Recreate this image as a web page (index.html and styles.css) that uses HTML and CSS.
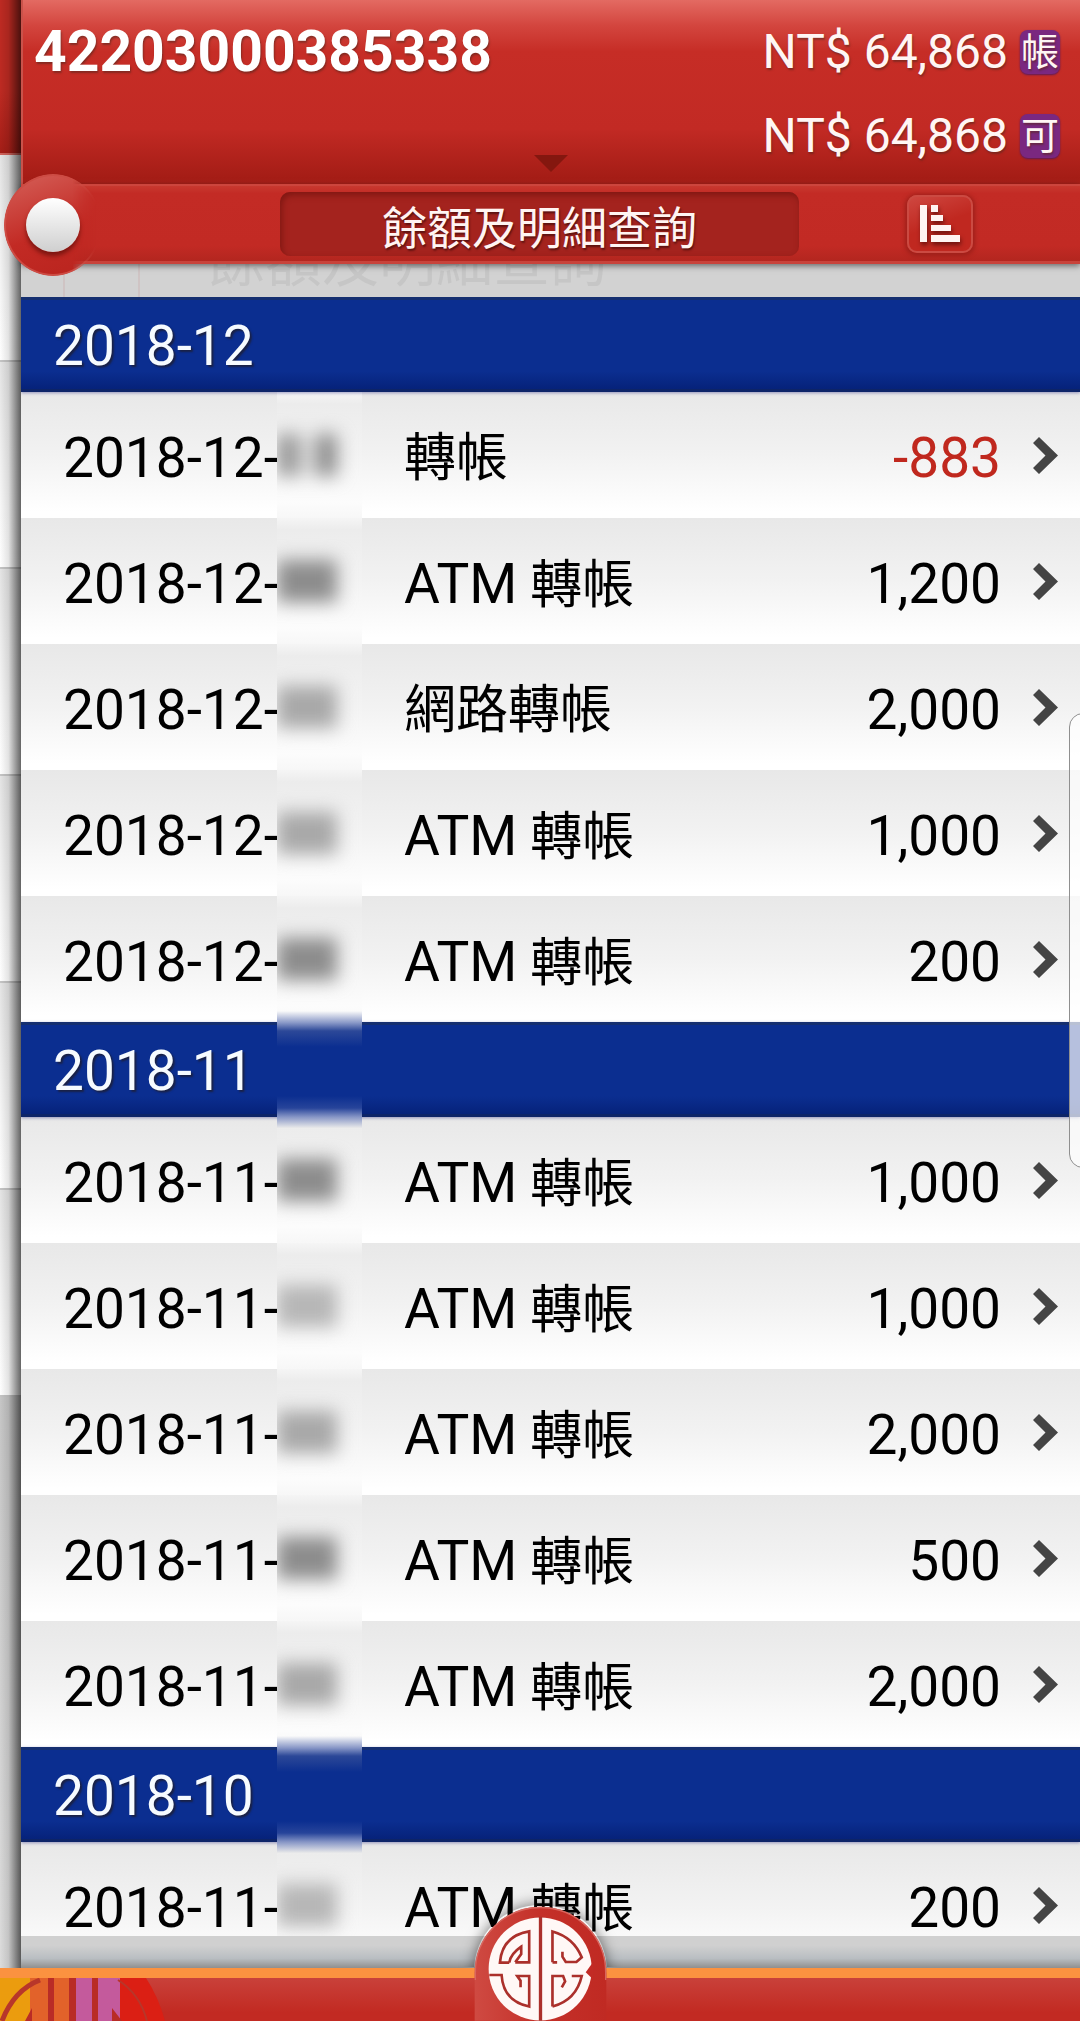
FILE: index.html
```html
<!DOCTYPE html>
<html lang="zh-Hant">
<head>
<meta charset="utf-8">
<meta name="viewport" content="width=device-width, initial-scale=1">
<title>餘額及明細查詢</title>
<link rel="stylesheet" href="styles.css">
</head>
<body>
<svg class="defs" aria-hidden="true">
  <symbol id="chevron" viewBox="0 0 25 37"><path d="M6 0 25 18.500 6 37 0 31 12.500 18.500 0 6Z" fill="#444"/></symbol>
</svg>
<div class="app">
  <aside class="underlay" aria-hidden="true">
    <div class="underlay-head"></div>
    <div class="underlay-row"></div>
    <div class="underlay-row"></div>
    <div class="underlay-row"></div>
    <div class="underlay-row"></div>
    <div class="underlay-row"></div>
    <div class="underlay-row"></div>
    <div class="underlay-rest"></div>
  </aside>

  <main class="panel">
    <header class="account">
      <h1 class="account-no">42203000385338</h1>
      <div class="balances">
        <p class="balance">NT$ 64,868 <span class="badge">帳</span></p>
        <p class="balance">NT$ 64,868 <span class="badge">可</span></p>
      </div>
      <span class="caret"></span>
    </header>

    <nav class="toolbar">
      <button class="knob" type="button" aria-label="選單"><span class="knob-dot"></span></button>
      <h2 class="toolbar-title">餘額及明細查詢</h2>
      <button class="sort" type="button" aria-label="排序">
        <svg class="sort-icon" viewBox="0 0 40 37"><path d="M0 0h7v37H0zM11 0h7v7h-7zM11 10h12v6H11zM11 20h20v6H11zM11 30h29v7H11z" fill="#fff4f2"/></svg>
      </button>
    </nav>

    <div class="ghost" aria-hidden="true"><span class="ghost-box"></span><span class="ghost-text">餘額及明細查詢</span></div>

    <div class="list">
      <section>
        <h3 class="month">2018-12</h3>
        <a class="row" href="#"><span class="date">2018-12-</span><span class="mask"><i class="blob split"></i></span><span class="desc">轉帳</span><span class="amount negative">-883</span><svg class="chevron"><use href="#chevron"/></svg></a>
        <a class="row" href="#"><span class="date">2018-12-</span><span class="mask"><i class="blob dark"></i></span><span class="desc"><b>ATM</b> 轉帳</span><span class="amount">1,200</span><svg class="chevron"><use href="#chevron"/></svg></a>
        <a class="row" href="#"><span class="date">2018-12-</span><span class="mask"><i class="blob"></i></span><span class="desc">網路轉帳</span><span class="amount">2,000</span><svg class="chevron"><use href="#chevron"/></svg></a>
        <a class="row" href="#"><span class="date">2018-12-</span><span class="mask"><i class="blob"></i></span><span class="desc"><b>ATM</b> 轉帳</span><span class="amount">1,000</span><svg class="chevron"><use href="#chevron"/></svg></a>
        <a class="row" href="#"><span class="date">2018-12-</span><span class="mask"><i class="blob dark"></i></span><span class="desc"><b>ATM</b> 轉帳</span><span class="amount">200</span><svg class="chevron"><use href="#chevron"/></svg></a>
      </section>
      <section>
        <h3 class="month smeared">2018-11</h3>
        <a class="row" href="#"><span class="date">2018-11-</span><span class="mask"><i class="blob dark"></i></span><span class="desc"><b>ATM</b> 轉帳</span><span class="amount">1,000</span><svg class="chevron"><use href="#chevron"/></svg></a>
        <a class="row" href="#"><span class="date">2018-11-</span><span class="mask"><i class="blob light"></i></span><span class="desc"><b>ATM</b> 轉帳</span><span class="amount">1,000</span><svg class="chevron"><use href="#chevron"/></svg></a>
        <a class="row" href="#"><span class="date">2018-11-</span><span class="mask"><i class="blob"></i></span><span class="desc"><b>ATM</b> 轉帳</span><span class="amount">2,000</span><svg class="chevron"><use href="#chevron"/></svg></a>
        <a class="row" href="#"><span class="date">2018-11-</span><span class="mask"><i class="blob dark"></i></span><span class="desc"><b>ATM</b> 轉帳</span><span class="amount">500</span><svg class="chevron"><use href="#chevron"/></svg></a>
        <a class="row" href="#"><span class="date">2018-11-</span><span class="mask"><i class="blob"></i></span><span class="desc"><b>ATM</b> 轉帳</span><span class="amount">2,000</span><svg class="chevron"><use href="#chevron"/></svg></a>
      </section>
      <section>
        <h3 class="month smeared">2018-10</h3>
        <a class="row" href="#"><span class="date">2018-11-</span><span class="mask"><i class="blob light"></i></span><span class="desc"><b>ATM</b> 轉帳</span><span class="amount">200</span><svg class="chevron"><use href="#chevron"/></svg></a>
      </section>
    </div>
    <div class="panel-end"></div>
  </main>

  <footer class="dock">
    <svg class="emblem" viewBox="0 0 165 43" aria-hidden="true">
      <path d="M118 0H146Q158 18 165 43H118Z" fill="#db1f14"/>
      <path d="M0 0H30V43H0Z" fill="#eb9c0e"/>
      <path d="M30 0H72V43H30Z" fill="#e2622a"/>
      <path d="M72 0H120V43H72Z" fill="#c45a9c"/>
      <path d="M48 0h6v43h-6zM69 0h7v43h-7zM92 0h6v43h-6z" fill="#b92c26"/>
      <path d="M2 43Q14 12 40 2" fill="none" stroke="#b8362a" stroke-width="5"/>
      <path d="M118 2Q140 16 147 43" fill="none" stroke="#b8362a" stroke-width="2"/>
      <path d="M25 43 32 30V43ZM112 43V30L122 43Z" fill="#b92c26"/>
    </svg>
    <button class="home" type="button" aria-label="首頁">
      <svg class="home-logo" viewBox="100 75 400 348">
        <defs><linearGradient id="dome" x1="0" y1="0" x2="1" y2="0"><stop offset="0" stop-color="#cf4a42"/><stop offset=".5" stop-color="#c43029"/><stop offset="1" stop-color="#c02a23"/></linearGradient></defs>
        <path d="M102 423V278A198 198 0 0 1 498 278V423Z" fill="url(#dome)"/>
        <path d="M104 300V278A196 196 0 0 1 496 278V300" fill="none" stroke="#d8665e" stroke-width="4"/>
        <circle cx="299" cy="267" r="155" fill="#fff8f6"/>
        <path d="M460 244 436 277 460 300Z" fill="#c22b25"/>
        <g fill="none" stroke="#ab302b" stroke-width="8">
          <path d="M300 110V423" stroke-width="10"/>
          <path d="M146 285H183Q188 364 266 380V288H230L240 302V322"/>
          <path d="M206 248H178Q184 168 266 154V247H224M206 248Q210 222 242 200V222L224 247"/>
          <path d="M336 247V154Q400 172 424 232L408 246H376L366 230V215"/>
          <path d="M336 247H350M336 380V288H368L374 304 364 322M394 288H424Q408 360 336 380"/>
        </g>
      </svg>
    </button>
  </footer>
  <span class="edge-handle"></span>
</div>
</body>
</html>
```
FILE: styles.css
```css
* { box-sizing: border-box; margin: 0; padding: 0; }

body {
  font-family: Roboto, "Noto Sans CJK TC", sans-serif;
  color: #000;
  background: #d2d2d2;
}

button { border: 0; background: none; cursor: pointer; }

.defs { position: absolute; width: 0; height: 0; }

.app {
  position: relative;
  display: grid;
  grid-template: minmax(0, 1fr) auto / 21px minmax(0, 1fr);
  height: 100vh;
  overflow: hidden;
}

/* Page peeking out from under the sliding panel */
.underlay {
  position: relative;
  display: flex;
  flex-direction: column;
  background: #d2d2d2;
  overflow: hidden;
}
.underlay::after {
  content: "";
  position: absolute;
  inset: 0;
  background: linear-gradient(90deg, transparent 0, rgba(0, 0, 0, .1) 40%, rgba(0, 0, 0, .6) 100%);
}
.underlay-head { flex: none; height: 155px; background: linear-gradient(#bd2a22 0 60%, #a51e17); border-bottom: 2px solid #cf625b; }
.underlay-row { flex: none; height: 207px; background: linear-gradient(#e4e4e4, #fff); border-bottom: 2px solid #c4c4c4; }
.underlay-rest { flex: 1; background: linear-gradient(#c6c6c6, #dcdcdc); }

.panel { display: flex; flex-direction: column; min-height: 0; }

.account {
  position: relative;
  display: flex;
  justify-content: space-between;
  height: 184px;
  padding: 10px 20px 0 11px;
  background: linear-gradient(#e36a62 0, #d3453e 14%, #c62d26 28%, #c22a24 70%, #a51d16 96%, #a82019);
  border-left: 2px solid #c9534b;
  color: #fff6f4;
  text-shadow: 1px 2px 2px rgba(90, 40, 30, .6);
}
.account-no { font-size: 57px; line-height: 84px; font-weight: 700; color: #fff; }
.balance { display: flex; align-items: center; gap: 12px; height: 84px; font-size: 48px; line-height: 82px; }
.badge {
  width: 40px;
  height: 44px;
  border-radius: 8px;
  background: #7a2880;
  box-shadow: 0 1px 2px #5a1a5c;
  font-size: 38px;
  line-height: 44px;
  text-align: center;
}
.caret {
  position: absolute;
  left: 50%;
  bottom: 12px;
  margin-left: -18px;
  border: 17px solid transparent;
  border-bottom: 0;
  border-top-color: #84170f;
}

.toolbar {
  position: relative;
  z-index: 3;
  display: grid;
  grid-template-columns: 259fr 519fr 281fr;
  align-items: center;
  height: 80px;
  background: linear-gradient(#c8382f 0, #c32b25 10%, #c22a24 80%, #b3261f);
  border-top: 2px solid #cc453d;
  border-bottom: 3px solid #c8433b;
  box-shadow: 0 2px 6px rgba(0, 0, 0, .5);
}
.toolbar-title {
  grid-column: 2;
  height: 64px;
  border-radius: 10px;
  background: #a4231e;
  box-shadow: inset 2px 3px 6px #7f1712;
  color: #fff4f2;
  font-size: 45px;
  font-weight: 400;
  line-height: 76px;
  text-align: center;
  text-shadow: 1px 2px 2px rgba(60, 10, 10, .7);
}
/* Knob hangs over the panel's left edge and fades into the bar */
.knob {
  position: absolute;
  left: -17px;
  top: -12px;
  display: grid;
  place-items: center;
  width: 98px;
  height: 102px;
}
.knob::before {
  content: "";
  grid-area: 1 / 1;
  width: 98px;
  height: 102px;
  border-radius: 50%;
  background: linear-gradient(160deg, #d25750 10%, #c22a24 55%, #b9241e);
  box-shadow: inset 0 0 0 2px #cd4c44;
  -webkit-mask: linear-gradient(90deg, #000 70%, transparent 94%);
  mask: linear-gradient(90deg, #000 70%, transparent 94%);
}
.knob-dot {
  grid-area: 1 / 1;
  z-index: 1;
  width: 54px;
  height: 54px;
  border-radius: 50%;
  background: linear-gradient(#fff, #cfcfcf);
  box-shadow: 0 4px 4px #7d1611;
}
.sort {
  justify-self: center;
  display: grid;
  place-items: center;
  width: 66px;
  height: 58px;
  border-radius: 10px;
  background: linear-gradient(160deg, #cf4942, #c02820 50%);
  box-shadow: inset 0 0 0 2px #cb4a42, 0 1px 4px 2px #9f201a;
}
.sort-icon { width: 40px; height: 37px; filter: drop-shadow(1px 3px 2px #6f130f); }

.ghost {
  display: flex;
  height: 33px;
  padding-left: 42px;
  background: #d2d2d2;
  overflow: hidden;
}
.ghost-box { width: 77px; height: 40px; margin-right: 68px; border: solid #cfc4c4; border-width: 0 2px; }
.ghost-text { color: #c6c6c6; font-size: 57px; line-height: 40px; margin-top: -22px; }

.list { flex: 1; min-height: 0; overflow: hidden; }

.month {
  position: relative;
  z-index: 2;
  height: 95px;
  padding-left: 32px;
  background: linear-gradient(#0b2e90 0 80%, #06227a);
  border-top: 3px solid #152f70;
  border-bottom: 3px solid #0d2468;
  box-shadow: 0 1px 3px rgba(20, 20, 120, .4);
  color: #f6fbff;
  font-size: 55px;
  font-weight: 400;
  line-height: 92px;
  text-shadow: 2px 2px 2px rgba(30, 30, 50, .8);
}
/* Blur strip of the hidden days runs across the month bars */
.smeared::after {
  content: "";
  position: absolute;
  left: 256px;
  top: -14px;
  bottom: -14px;
  width: 85px;
  background: linear-gradient(#fafafa 0, #8796c6 12px, #2c4898 20px, #0b2e90 36px calc(100% - 32px), #27449a calc(100% - 20px), #8796c6 calc(100% - 11px), #eaeaea 100%);
}

.row {
  display: flex;
  align-items: center;
  height: 126px;
  padding: 0 22px 0 42px;
  background: linear-gradient(#e8e8e8, #f2f2f2 50%, #fff 95%);
  color: #000;
  font-size: 55px;
  line-height: 80px;
  text-decoration: none;
}
.date, .amount { padding-top: 6px; }
.date { width: 214px; white-space: nowrap; }
.mask {
  z-index: 1;
  display: grid;
  place-items: center start;
  width: 85px;
  height: 126px;
  background: linear-gradient(#f5f5f5, #ececec 12px, #f3f3f3 50%, #fcfcfc 110px, #f7f7f7);
  overflow: hidden;
}
.blob { width: 60px; height: 42px; background: #a8a8a8; filter: blur(9px); }
.blob.dark { background: #8c8c8c; }
.blob.light { background: #b6b6b6; }
.blob.split { background: linear-gradient(90deg, #999 0 20px, #eee 28px 34px, #8c8c8c 42px); }
.desc { flex: 1; padding: 8px 0 0 42px; font-size: 52px; }
.desc b { font-size: 55px; font-weight: 400; }
.amount { margin-right: 32px; }
.negative { color: #c0281e; }
.chevron { width: 25px; height: 37px; }

.panel-end { height: 32px; background: linear-gradient(#d0d0d0 30%, #b9bec2 70%, #8f8f8f); }

.dock {
  position: relative;
  z-index: 3;
  grid-column: 1 / -1;
  height: 53px;
  background: linear-gradient(#c9413a, #c22a22 80%);
  border-top: 10px solid #fb9240;
}
.emblem { display: block; width: 165px; height: 43px; }
.home {
  position: absolute;
  left: 50%;
  bottom: 0;
  width: 133px;
  height: 116px;
  margin-left: -66px;
  border-radius: 66px 66px 0 0;
  box-shadow: 0 -1px 14px rgba(0, 0, 0, .5);
  clip-path: polygon(-20px -20px, 153px -20px, 153px 62px, 133px 62px, 133px 116px, 0 116px, 0 62px, -20px 62px);
}
.home-logo { display: block; width: 133px; height: 116px; }

/* System edge-panel handle */
.edge-handle {
  position: absolute;
  z-index: 4;
  right: -30px;
  top: 713px;
  width: 41px;
  height: 455px;
  border: 1px solid #8f8f8f;
  border-radius: 14px;
  background: rgba(255, 255, 255, .7);
}
```
